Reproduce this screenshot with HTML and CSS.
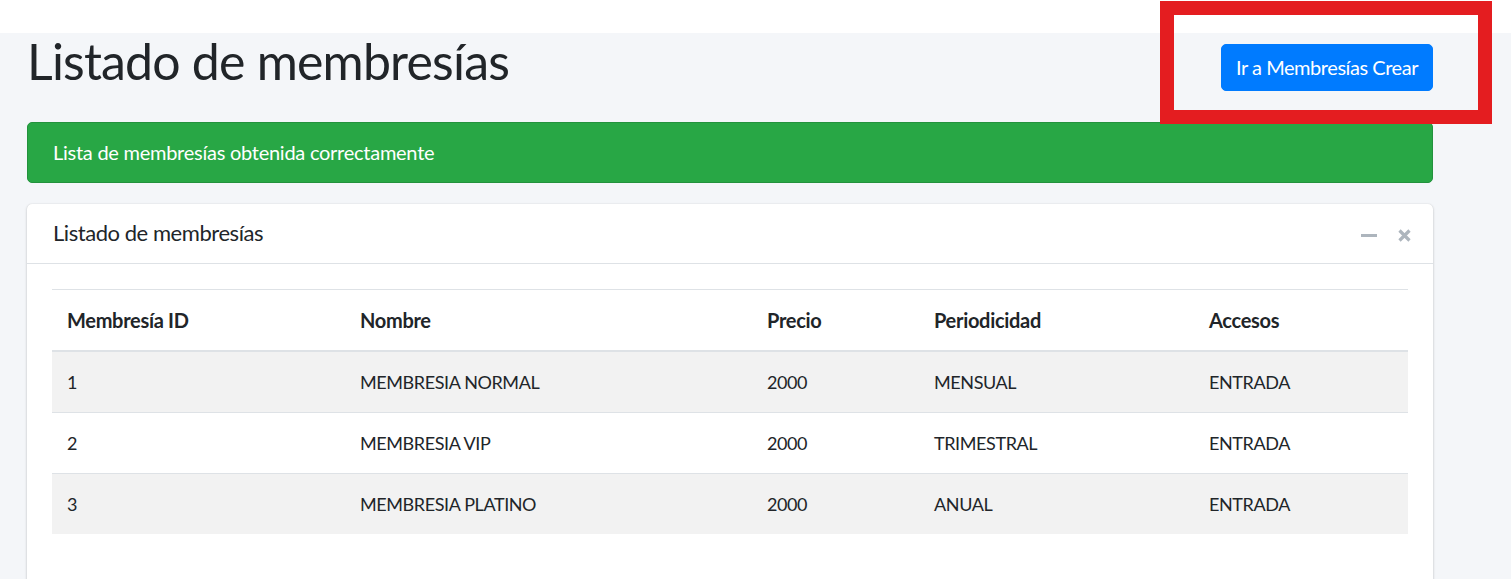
FILE: index.html
```html
<!DOCTYPE html>
<html lang="es">
<head>
<meta charset="utf-8">
<title>Listado de membresías</title>
<link rel="stylesheet" href="styles.css">
</head>
<body>
<div class="topbar"></div>
<main class="content">
  <div class="page-header">
    <h1 class="page-title">Listado de membresías</h1>
    <a class="btn-primary" href="#">Ir a Membresías Crear</a>
  </div>
  <div class="alert-success">Lista de membresías obtenida correctamente</div>
  <section class="card">
    <div class="card-header">
      <h3 class="card-title">Listado de membresías</h3>
      <div class="card-tools">
        <span class="tool-minus"></span>
        <svg class="tool-close" width="13" height="13" viewBox="0 0 13 13"><path d="M1.5 1.5 L11.5 11.5 M11.5 1.5 L1.5 11.5" stroke="#adb5bd" stroke-width="3.2" stroke-linecap="butt"/></svg>
      </div>
    </div>
    <div class="card-body">
      <table class="table">
        <colgroup>
          <col class="c1"><col class="c2"><col class="c3"><col class="c4"><col class="c5">
        </colgroup>
        <thead>
          <tr><th>Membresía ID</th><th>Nombre</th><th>Precio</th><th>Periodicidad</th><th>Accesos</th></tr>
        </thead>
        <tbody>
          <tr class="odd"><td>1</td><td>MEMBRESIA NORMAL</td><td>2000</td><td>MENSUAL</td><td>ENTRADA</td></tr>
          <tr><td>2</td><td>MEMBRESIA VIP</td><td>2000</td><td>TRIMESTRAL</td><td>ENTRADA</td></tr>
          <tr class="odd"><td>3</td><td>MEMBRESIA PLATINO</td><td>2000</td><td>ANUAL</td><td>ENTRADA</td></tr>
        </tbody>
      </table>
    </div>
  </section>
</main>
<div class="annotation"></div>
</body>
</html>
```
FILE: styles.css
```css
html, body {
  margin: 0;
  padding: 0;
}
body {
  font-family: Lato, "Liberation Sans", sans-serif;
  font-size: 20px;
  color: #212529;
  background: #f4f6f9;
  height: 579px;
  overflow: hidden;
}
.topbar {
  height: 33px;
  background: #ffffff;
}
.content {
  width: 1406px;
  margin-left: 27px;
}
.page-header {
  display: flex;
  justify-content: space-between;
  align-items: flex-start;
  height: 89px;
}
.page-title {
  margin: -2px 0 0 0;
  font-size: 50px;
  font-weight: 400;
  line-height: 60px;
  letter-spacing: -0.8px;
  color: #212529;
}
.btn-primary {
  display: inline-block;
  margin-top: 11px;
  box-sizing: border-box;
  width: 212px;
  height: 47px;
  line-height: 45px;
  text-align: center;
  background: #007bff;
  border: 1px solid #007bff;
  border-radius: 5px;
  color: #ffffff;
  font-size: 20px;
  letter-spacing: -0.45px;
  text-decoration: none;
}
.alert-success {
  box-sizing: border-box;
  height: 61px;
  display: flex;
  align-items: center;
  padding: 0 25px 2px 25px;
  background: #28a745;
  border: 1px solid #23923d;
  border-radius: 5px;
  color: #ffffff;
  font-size: 20px;
  letter-spacing: -0.26px;
}
.card {
  margin-top: 21px;
  background: #ffffff;
  border-radius: 5px;
  box-shadow: 0 0 1px rgba(0,0,0,.125), 0 1px 3px rgba(0,0,0,.2);
  height: 390px;
}
.card-header {
  box-sizing: border-box;
  height: 60px;
  border-bottom: 1px solid #dee2e6;
  display: flex;
  align-items: center;
  justify-content: space-between;
  padding: 0 22px 0 26px;
}
.card-title {
  margin: -3px 0 0 0;
  font-size: 22px;
  font-weight: 400;
  letter-spacing: -0.45px;
}
.card-tools {
  display: flex;
  align-items: center;
  gap: 21px;
  margin-top: 4px;
}
.tool-minus {
  display: block;
  width: 16px;
  height: 3px;
  background: #adb5bd;
}
.tool-close {
  display: block;
}
.card-body {
  padding: 25px;
}
.table {
  width: 100%;
  border-collapse: collapse;
  table-layout: fixed;
}
.c1 { width: 293px; }
.c2 { width: 407px; }
.c3 { width: 167px; }
.c4 { width: 275px; }
.c5 { width: 214px; }
.table th,
.table td {
  text-align: left;
  padding: 0 15px;
  height: 60px;
  border-top: 1px solid #dee2e6;
  vertical-align: middle;
  white-space: nowrap;
}
.table th {
  font-weight: 700;
  font-size: 20px;
  letter-spacing: -0.3px;
  border-bottom: 2px solid #dee2e6;
}
.table td {
  font-weight: 400;
  font-size: 18px;
  letter-spacing: -0.4px;
}
.table tr.odd td {
  background: #f2f2f2;
}
.annotation {
  position: absolute;
  left: 1160px;
  top: 1px;
  width: 332px;
  height: 123px;
  box-sizing: border-box;
  border: 14px solid #e41d20;
}
```
